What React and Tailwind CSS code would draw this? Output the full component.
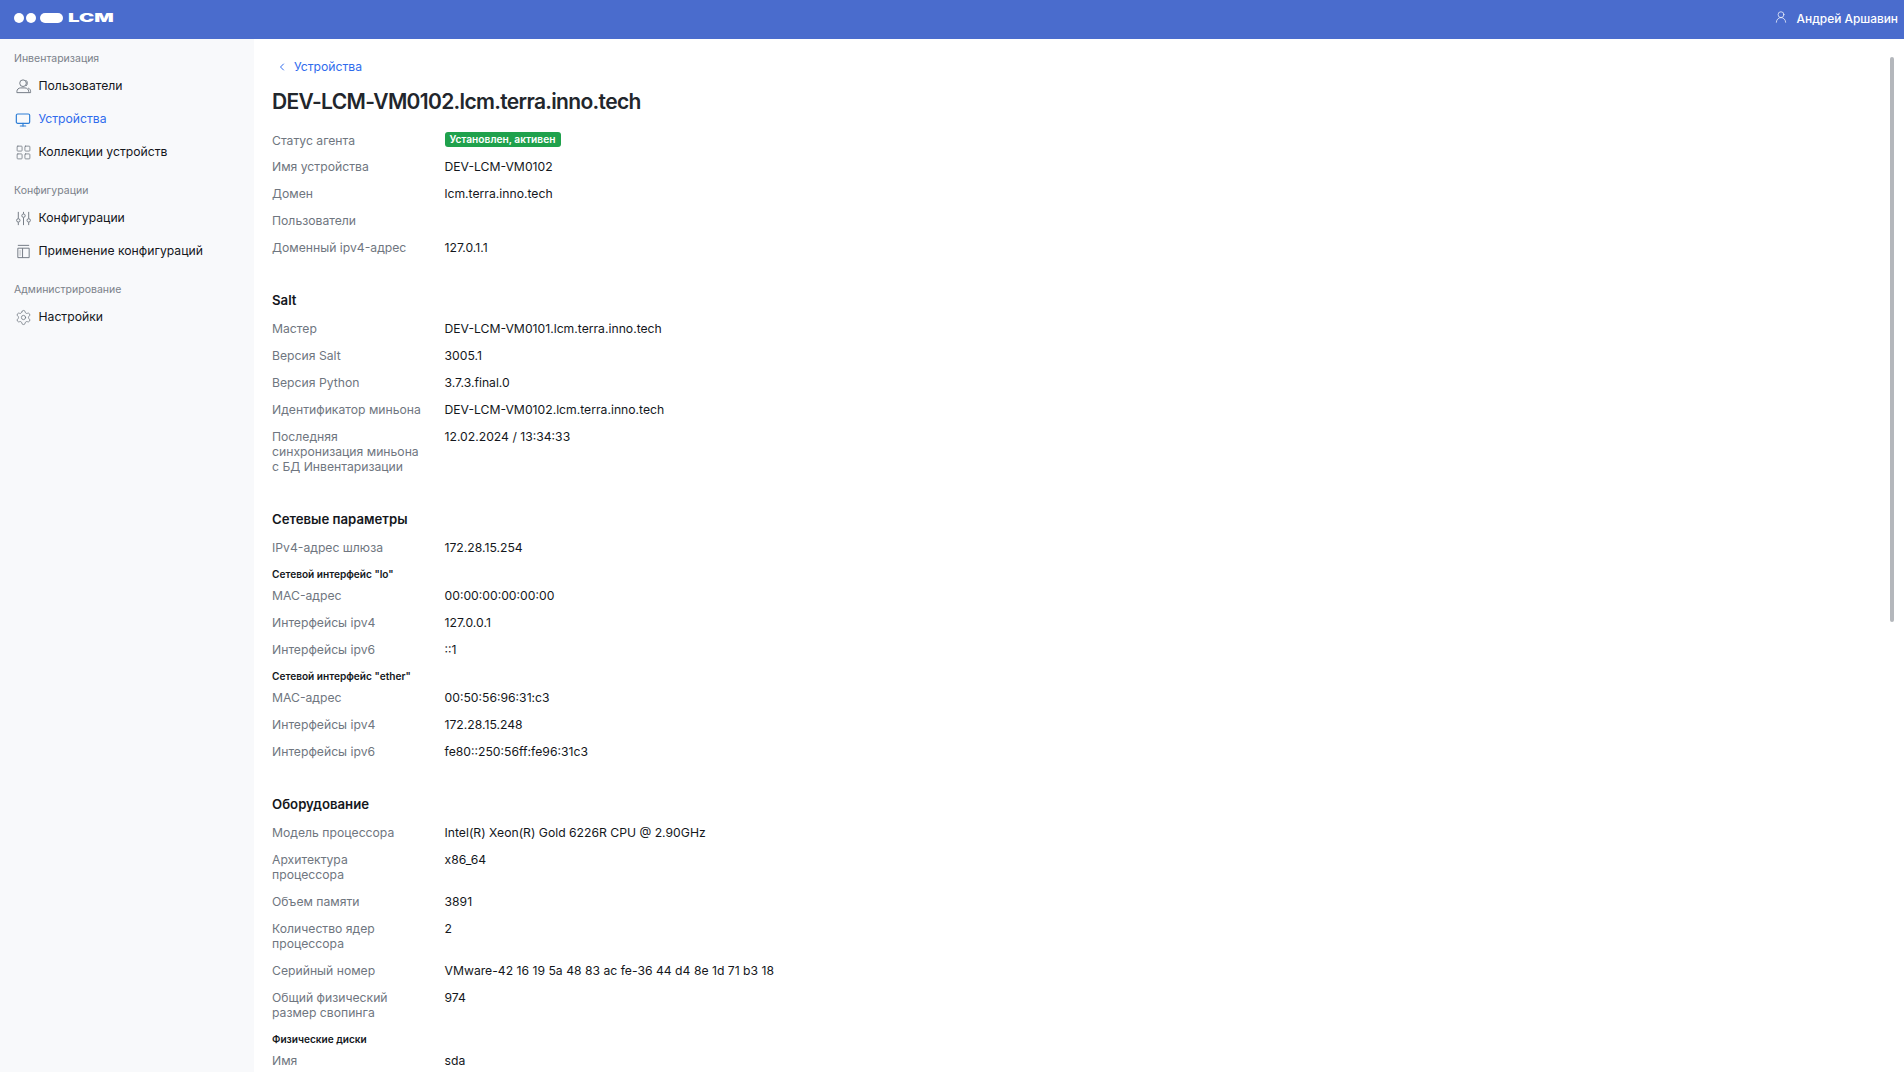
import { UserRound, Monitor, LayoutGrid, Settings, ChevronLeft } from 'lucide-react';

const UsersIcon = ({ className }) => (
  <svg width="17" height="17" viewBox="0 0 18 18" fill="none" stroke="currentColor" strokeWidth="1" className={className}>
    <circle cx="8.500" cy="5.500" r="3.500" />
    <path d="M11.500 2.300a3.500 3.500 0 0 1 1.500 3.200 3.500 3.500 0 0 1-1.500 3" />
    <path d="M2 15.500v-1.200c0-2.200 1.800-3.800 4-3.800h4.500c2.200 0 4 1.600 4 3.800v1.200z" />
    <path d="M14 10.700c1.500.4 2.500 1.800 2.500 3.500v1.300h-2" />
  </svg>
);

const SlidersIcon = ({ className }) => (
  <svg width="17" height="17" viewBox="0 0 18 18" fill="none" stroke="currentColor" strokeWidth="1" className={className}>
    <path d="M3.500 2v7M3.500 13v3M9 2v2M9 8v8M14.500 2v7M14.500 13v3" />
    <circle cx="3.500" cy="11" r="1.800" />
    <circle cx="9" cy="6" r="1.800" />
    <circle cx="14.500" cy="11" r="1.800" />
  </svg>
);

const PanelsIcon = ({ className }) => (
  <svg width="17" height="17" viewBox="0 0 18 18" fill="none" stroke="currentColor" strokeWidth="1" className={className}>
    <path d="M3 2.500h12" />
    <path d="M3 5.500h12v10H3z" />
    <path d="M8 5.500v10" />
    <path d="M4.500 7.500h2v6h-2z" fill="currentColor" fillOpacity="0.25" stroke="none" />
  </svg>
);

const menu = [
  {
    title: 'Инвентаризация',
    items: [
      { label: 'Пользователи', icon: UsersIcon },
      { label: 'Устройства', icon: Monitor, active: true },
      { label: 'Коллекции устройств', icon: LayoutGrid },
    ],
  },
  {
    title: 'Конфигурации',
    items: [
      { label: 'Конфигурации', icon: SlidersIcon },
      { label: 'Применение конфигураций', icon: PanelsIcon },
    ],
  },
  {
    title: 'Администрирование',
    items: [{ label: 'Настройки', icon: Settings }],
  },
];

const Row = ({ label, children, tight }) => (
  <div className={`flex pt-[6px] text-[12.2px] leading-[15px] ${tight ? 'pb-[5px]' : 'pb-[6px]'}`}>
    <div className="w-[172.5px] pr-[22px] shrink-0 text-[#6f7680]">{label}</div>
    <div className="text-[#14171c]">{children}</div>
  </div>
);

const Section = ({ children }) => (
  <h2 className="mt-[29px] mb-[5px] text-[13.2px] leading-[20px] font-semibold text-[#14171c]">{children}</h2>
);

const SubTitle = ({ children }) => (
  <h3 className="mt-[6px] mb-[1px] text-[10.1px] leading-[14px] font-semibold text-[#14171c]">{children}</h3>
);

const Logo = () => (
  <div className="flex items-center -mt-[3px]">
    <span className="w-[10px] h-[10px] rounded-full bg-white" />
    <span className="w-[10px] h-[10px] rounded-full bg-white ml-[2px]" />
    <span className="w-[23px] h-[10px] rounded-full bg-white ml-[4px]" />
    <span className="ml-[5px] text-white text-[12px] leading-[10px] font-black scale-x-[1.7] origin-left">LCM</span>
  </div>
);

const Sidebar = () => (
  <aside className="w-[254px] shrink-0 bg-[#f8f9fb] pt-[9px]">
    {menu.map((group) => (
      <div key={group.title} className="mb-[11px]">
        <div className="px-[14px] py-[3px] text-[10.5px] leading-[16px] text-[#7b818a]">{group.title}</div>
        {group.items.map((item) => {
          const Icon = item.icon;
          return (
            <div
              key={item.label}
              className={`h-[33px] pl-[15px] flex items-center gap-[7px] text-[12.2px] ${item.active ? 'text-[#2f6bed]' : 'text-[#14171c]'}`}
            >
              {item.active ? (
                <Icon size={16} strokeWidth={1.8} className="w-[16px] mr-[1px] text-[#2f7fd6]" />
              ) : (
                <Icon size={17} strokeWidth={1.1} className="w-[17px] text-[#6f7680]" />
              )}
              <span className="-ml-[0.5px]">{item.label}</span>
            </div>
          );
        })}
      </div>
    ))}
  </aside>
);

export default function App() {
  return (
    <div className="h-[1072px] overflow-hidden bg-white relative font-['Inter',sans-serif]">
      <header className="h-[39px] bg-[#4a6ccd] flex items-center justify-between pl-[14px] pr-[6px]">
        <Logo />
        <div className="flex items-center gap-[9px] text-white text-[11.9px] font-medium -mt-[1px]">
          <UserRound size={14} strokeWidth={1.2} className="-mt-[3px]" />
          <span>Андрей Аршавин</span>
        </div>
      </header>

      <div className="flex h-[1033px]">
        <Sidebar />
        <main className="flex-1 pl-[18px] pt-[19px] overflow-hidden">
          <div className="flex items-center text-[12.2px] leading-[18px] text-[#2f6bed]">
            <ChevronLeft size={12} strokeWidth={2} className="ml-[4px] mr-[6px]" />
            Устройства
          </div>
          <h1 className="mt-[10px] mb-[9px] text-[21px] leading-[32px] font-semibold tracking-[-0.032em] text-[#22262c]">
            DEV-LCM-VM0102.lcm.terra.inno.tech
          </h1>

          <Row label="Статус агента" tight>
            <span className="block w-[116px] h-[15px] -mt-[1px] rounded-[3px] bg-[#1fa14c] text-center text-white text-[10.2px] leading-[14px] font-semibold">
              Установлен, активен
            </span>
          </Row>
          <Row label="Имя устройства">DEV-LCM-VM0102</Row>
          <Row label="Домен">lcm.terra.inno.tech</Row>
          <Row label="Пользователи" />
          <Row label="Доменный ipv4-адрес">127.0.1.1</Row>

          <Section>Salt</Section>
          <Row label="Мастер">DEV-LCM-VM0101.lcm.terra.inno.tech</Row>
          <Row label="Версия Salt">3005.1</Row>
          <Row label="Версия Python">3.7.3.final.0</Row>
          <Row label="Идентификатор миньона">DEV-LCM-VM0102.lcm.terra.inno.tech</Row>
          <Row label="Последняя синхронизация миньона с БД Инвентаризации">12.02.2024 / 13:34:33</Row>

          <Section>Сетевые параметры</Section>
          <Row label="IPv4-адрес шлюза">172.28.15.254</Row>
          <SubTitle>Сетевой интерфейс "lo"</SubTitle>
          <Row label="MAC-адрес">00:00:00:00:00:00</Row>
          <Row label="Интерфейсы ipv4">127.0.0.1</Row>
          <Row label="Интерфейсы ipv6">::1</Row>
          <SubTitle>Сетевой интерфейс "ether"</SubTitle>
          <Row label="MAC-адрес">00:50:56:96:31:c3</Row>
          <Row label="Интерфейсы ipv4">172.28.15.248</Row>
          <Row label="Интерфейсы ipv6">fe80::250:56ff:fe96:31c3</Row>

          <Section>Оборудование</Section>
          <Row label="Модель процессора">Intel(R) Xeon(R) Gold 6226R CPU @ 2.90GHz</Row>
          <Row label="Архитектура процессора">x86_64</Row>
          <Row label="Объем памяти">3891</Row>
          <Row label="Количество ядер процессора">2</Row>
          <Row label="Серийный номер">VMware-42 16 19 5a 48 83 ac fe-36 44 d4 8e 1d 71 b3 18</Row>
          <Row label="Общий физический размер свопинга">974</Row>
          <SubTitle>Физические диски</SubTitle>
          <Row label="Имя">sda</Row>
        </main>
      </div>

      <div className="absolute right-[10px] top-[57px] w-[4px] h-[565px] rounded-full bg-[#b4b7bc]" />
    </div>
  );
}
